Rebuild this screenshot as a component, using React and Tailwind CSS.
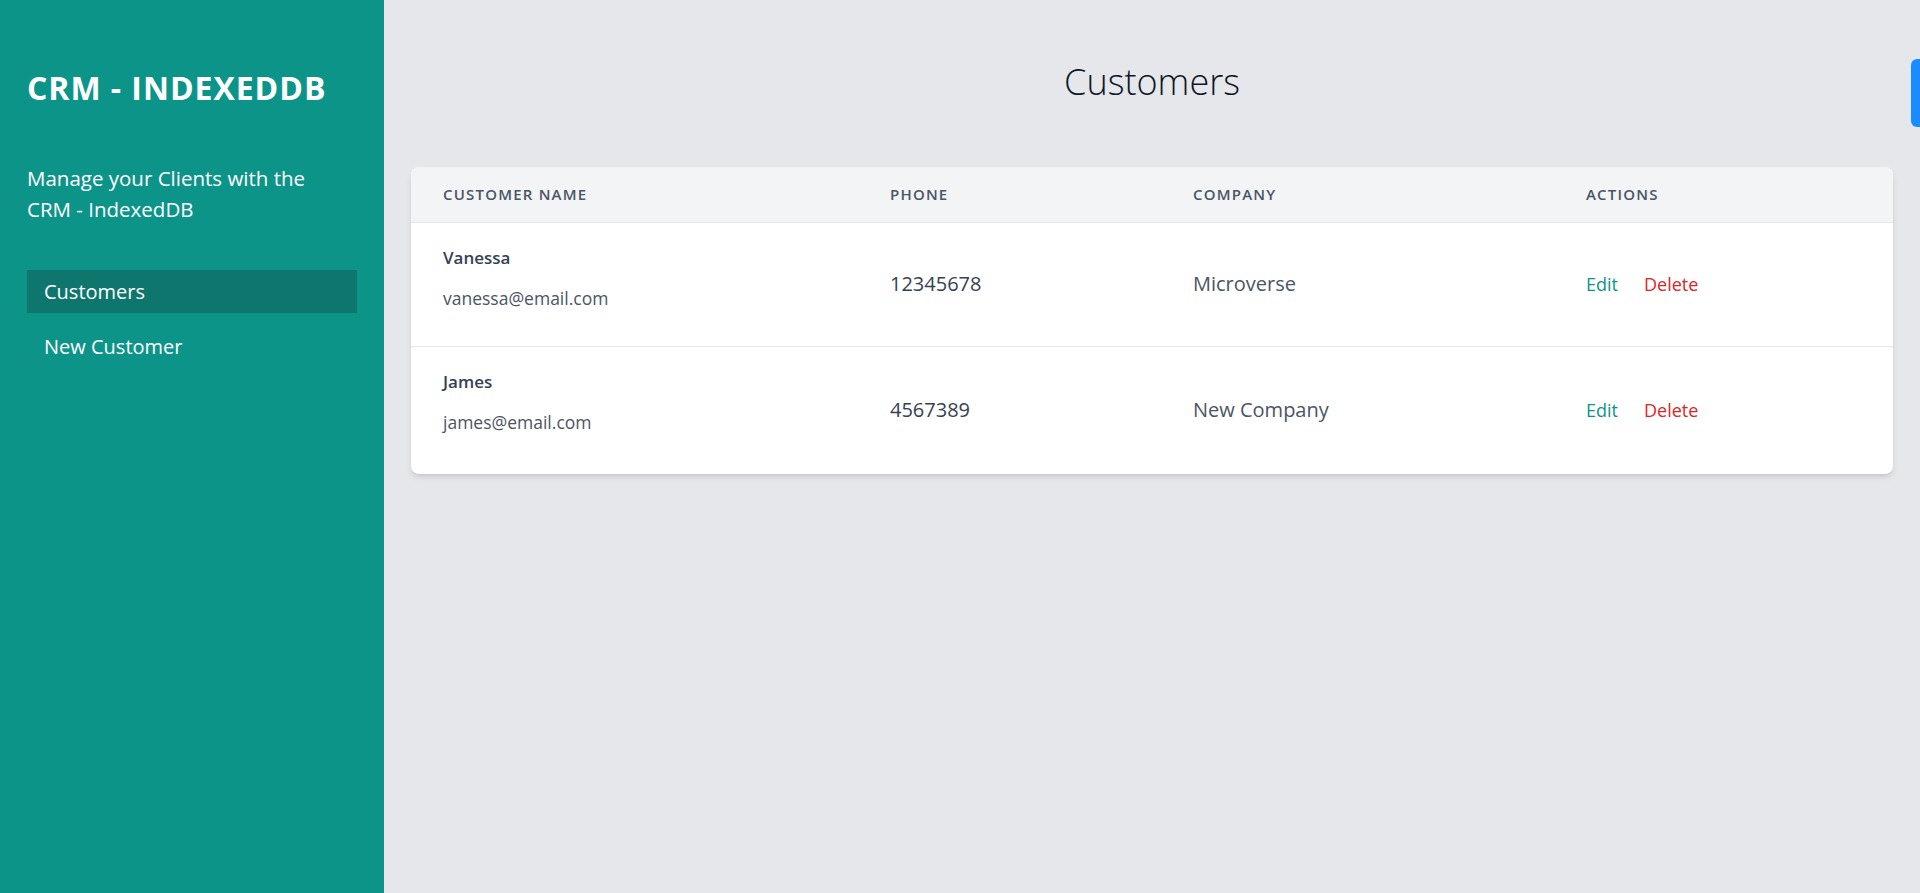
const customers = [
  { id: 1, name: 'Vanessa', email: 'vanessa@email.com', phone: '12345678', company: 'Microverse' },
  { id: 2, name: 'James', email: 'james@email.com', phone: '4567389', company: 'New Company' },
]

const font = { fontFamily: '"Open Sans", "Noto Sans", sans-serif' }

function Sidebar() {
  return (
    <aside className="w-[384px] shrink-0 bg-[#0d9488] px-[27px] pt-[69px] text-white">
      <h1 className="text-[32px] font-bold leading-[38px] tracking-[0.03em]">CRM - INDEXEDDB</h1>
      <p className="mt-[56px] max-w-[300px] text-[20.5px] leading-[31px]">
        Manage your Clients with the CRM - IndexedDB
      </p>
      <nav className="mt-[45px] flex flex-col gap-3">
        <a href="#" className="block h-[43px] bg-[#0f766e] px-[17px] text-[20px] leading-[43px]">
          Customers
        </a>
        <a href="#" className="block h-[43px] px-[17px] text-[20px] leading-[43px]">
          New Customer
        </a>
      </nav>
    </aside>
  )
}

function CustomerRow({ customer }) {
  return (
    <tr className="h-[124px] border-b border-[#e5e7eb] last:h-[128px] last:border-b-0">
      <td className="px-8 pt-[23px] align-top">
        <p className="text-[17px] font-semibold leading-6 text-gray-700">{customer.name}</p>
        <p className="mt-4 text-[17.5px] leading-6 text-gray-600">{customer.email}</p>
      </td>
      <td className="px-8 align-middle text-[20px] text-gray-700">{customer.phone}</td>
      <td className="px-8 align-middle text-[20px] text-gray-600">{customer.company}</td>
      <td className="px-8 align-middle text-[18px]">
        <a href="#" className="text-[#0d9488]">Edit</a>
        <a href="#" className="ml-[26px] text-[#dc2626]">Delete</a>
      </td>
    </tr>
  )
}

export default function App() {
  return (
    <div className="flex min-h-[893px]" style={font}>
      <Sidebar />
      <main className="relative flex-1 bg-[#e5e7eb] px-[27px] pt-[62px]">
        <h2 className="text-center text-[36px] font-light leading-[40px] text-gray-900">Customers</h2>

        <div className="mt-[65px] overflow-hidden rounded-lg bg-white shadow-md">
          <table className="w-full table-fixed text-left">
            <colgroup>
              <col className="w-[447px]" />
              <col className="w-[303px]" />
              <col className="w-[393px]" />
              <col />
            </colgroup>
            <thead className="bg-[#f3f4f6]">
              <tr className="h-[55px] border-b border-[#e5e7eb]">
                {['Customer Name', 'Phone', 'Company', 'Actions'].map((label) => (
                  <th
                    key={label}
                    className="px-8 text-[15px] font-semibold uppercase tracking-[0.08em] text-gray-600"
                  >
                    {label}
                  </th>
                ))}
              </tr>
            </thead>
            <tbody>
              {customers.map((customer) => (
                <CustomerRow key={customer.id} customer={customer} />
              ))}
            </tbody>
          </table>
        </div>

        {/* extension tab on the right edge */}
        <div className="absolute right-0 top-[59px] h-[68px] w-[9px] rounded-l-md bg-[#1a8cff]" />
      </main>
    </div>
  )
}
